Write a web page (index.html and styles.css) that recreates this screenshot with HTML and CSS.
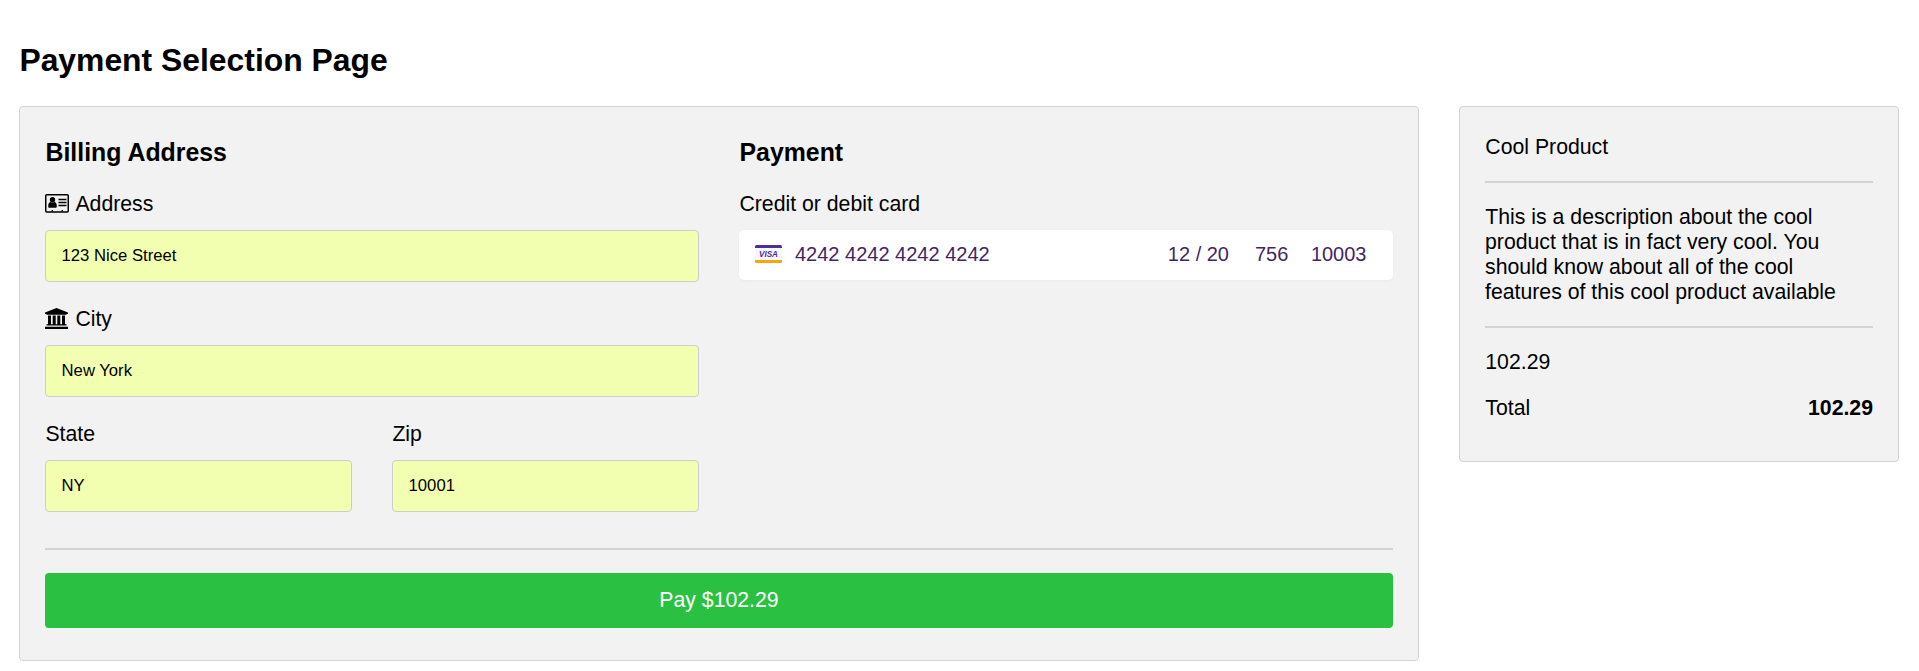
FILE: index.html
```html
<!DOCTYPE html>
<html lang="en">
<head>
<meta charset="utf-8">
<title>Payment Selection Page</title>
<link rel="stylesheet" href="styles.css">
</head>
<body>
<h2 class="page-title">Payment Selection Page</h2>
<main class="layout">
  <form class="card checkout">
    <div class="columns">
      <section class="column">
        <h3 class="section-title">Billing Address</h3>
        <div class="field">
          <label class="label" for="address">
            <svg class="icon" width="24" height="19" viewBox="0 0 24 19"><rect x=".75" y=".75" width="22.5" height="17.300" rx="1" fill="none" stroke="#000" stroke-width="1.500"/><circle cx="7.5" cy="5.800" r="2.700"/><path d="M3.200 12.400c0-3.200 1.2-4.400 2.500-4.400 1 .8 2.600 .8 3.600 0 1.300 0 2.500 1.200 2.500 4.400 0 .9-.5 1.400-1.300 1.400H4.500c-.8 0-1.300-.5-1.300-1.400z"/><path d="M13.500 5.500h8M13.500 8.500h8M13.500 11.500h8" stroke="#000" stroke-width="1.300"/><path d="M6.500 16h1.500v1.500H6.500zM16.500 16H18v1.500h-1.500z"/></svg>
            <span>Address</span>
          </label>
          <input class="input" id="address" type="text" value="123 Nice Street">
        </div>
        <div class="field">
          <label class="label" for="city">
            <svg class="icon icon-bank" width="23" height="21" viewBox="0 0 23 21"><path d="M11.500 0L23 4.500V6h-1.500v.8h-20V6H0V4.500zM3 7.500h3v8.800h1.700V7.500h3v8.800h1.600V7.500h3v8.800H17V7.500h3v8.800h1.500v1.200h-20v-1.200H3zM0 18.700h23V21H0z"/></svg>
            <span>City</span>
          </label>
          <input class="input" id="city" type="text" value="New York">
        </div>
        <div class="field-row">
          <div class="field">
            <label class="label" for="state"><span>State</span></label>
            <input class="input" id="state" type="text" value="NY">
          </div>
          <div class="field">
            <label class="label" for="zip"><span>Zip</span></label>
            <input class="input" id="zip" type="text" value="10001">
          </div>
        </div>
      </section>
      <section class="column">
        <h3 class="section-title">Payment</h3>
        <div class="label"><span>Credit or debit card</span></div>
        <div class="card-element">
          <svg class="visa" width="27" height="18" viewBox="0 0 27 18"><rect width="27" height="18" rx="1.500" fill="#f7f6fe"/><path d="M0 3V1.500Q0 0 1.500 0h24Q27 0 27 1.500V3z" fill="#4c2f9c"/><path d="M0 15h27v1.500q0 1.500-1.500 1.500h-24Q0 18 0 16.500z" fill="#f9a60a"/><text x="4" y="12.300" class="visa-text" textLength="19" lengthAdjust="spacingAndGlyphs">VISA</text></svg>
          <span class="card-number">4242 4242 4242 4242</span>
          <span class="card-expiry">12 / 20</span>
          <span class="card-cvc">756</span>
          <span>10003</span>
        </div>
      </section>
    </div>
    <hr class="rule">
    <button class="pay" type="button">Pay $102.29</button>
  </form>
  <aside class="card summary">
    <p class="text">Cool Product</p>
    <hr class="rule">
    <p class="text">This is a description about the cool product that is in fact very cool. You should know about all of the cool features of this cool product available</p>
    <hr class="rule">
    <p class="text">102.29</p>
    <p class="text total"><span>Total</span><b>102.29</b></p>
  </aside>
</main>
</body>
</html>
```
FILE: styles.css
```css
* { box-sizing: border-box; }
body {
  margin: 0;
  padding: 42px 20px 0 19px;
  background: #fff;
  color: #000;
  font: 21.25px/25px "Liberation Sans", Arial, sans-serif;
}
.page-title { margin: 0 0 28px; font-size: 31.875px; line-height: 36px; text-indent: 0.4px; }
.layout {
  display: grid;
  grid-template-columns: 1400px 440px;
  gap: 40px;
  align-items: start;
}
.card { padding: 0 25px; border: 1px solid #d3d3d3; border-radius: 4px; background: #f2f2f2; }
.checkout { height: 555px; padding-top: 31px; }
.columns { display: grid; grid-template-columns: 1fr 1fr; gap: 40px; }
.section-title { margin: 0 0 24px; font-size: 24.86px; line-height: 29px; text-indent: 0.5px; }
.field { margin-bottom: 24px; }
.field-row { display: grid; grid-template-columns: 1fr 1fr; gap: 40px; }
.label { display: flex; align-items: center; gap: 6px; height: 25px; margin-bottom: 14px; }
.label span { padding: 2px 0 0 0.4px; }
.icon { flex: none; }
.icon-bank { margin-right: 1px; }
.input {
  display: block;
  width: 100%;
  height: 52px;
  padding: 0 15.6px;
  border: 1px solid #ccc;
  border-radius: 4px;
  background: #f2ffb0;
  color: #000;
  font: 16.67px "Liberation Sans", Arial, sans-serif;
}
.card-element {
  display: flex;
  align-items: center;
  height: 50px;
  padding: 0 26.5px 2px 16px;
  border-radius: 5px;
  background: #fff;
  box-shadow: 0 1px 3px #e6ebf1;
  color: #42275f;
  font-size: 20px;
  white-space: nowrap;
}
.visa { margin-right: 13px; }
.visa-text { fill: #4c2f9c; font: italic bold 9.500px "Liberation Sans", Arial, sans-serif; }
.card-number { flex: 1; }
.card-expiry { margin-right: 26px; }
.card-cvc { margin-right: 22.5px; }
.rule { height: 2px; margin: 22px 0 23px; border: 0; background: #d3d3d3; }
.checkout .rule { margin-top: 12px; }
.pay {
  display: block;
  width: 100%;
  height: 55px;
  padding: 0;
  border: 0;
  border-radius: 4px;
  background: #2ac143;
  color: #fff;
  font: 21.25px/25px "Liberation Sans", Arial, sans-serif;
}
.summary { height: 356px; padding-top: 28px; }
.text { margin: 0 0 21px; text-indent: 0.3px; }
.summary .rule { margin: 21px 0 22px; }
.total { display: flex; justify-content: space-between; }
```
